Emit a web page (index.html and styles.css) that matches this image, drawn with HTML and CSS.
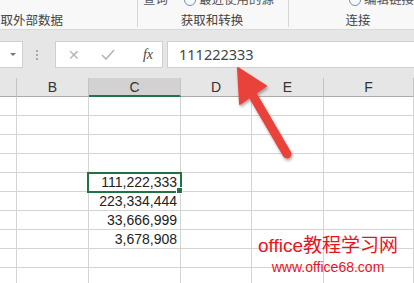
FILE: index.html
```html
<!DOCTYPE html>
<html lang="zh-CN">
<head>
  <meta charset="UTF-8">
  <meta name="viewport" content="width=device-width, initial-scale=1.0">
  <title>数据 - 获取和转换</title>
  <link rel="stylesheet" href="styles.css">
</head>
<body>
  <!-- Ribbon (bottom part only) -->
  <div class="ribbon">
    <div class="group first">
      <div class="top-line"></div>
      <div class="label"><span class="cut">获取外部数据</span></div>
    </div>
    <div class="group second">
      <div class="top-line">
        <span class="query">查询</span>
        <span class="recent"><span class="mini-icon"></span>最近使用的源</span>
      </div>
      <div class="label">获取和转换</div>
    </div>
    <div class="group third">
      <div class="top-line">
        <span class="links"><span class="mini-icon"></span>编辑链接</span>
      </div>
      <div class="label">连接</div>
    </div>
  </div>

  <!-- Formula bar -->
  <div class="formula-bar">
    <div class="name-box"><span class="drop"></span></div>
    <div class="grip"><span></span></div>
    <div class="fx-box">
      <span class="btn cancel">✕</span>
      <span class="btn enter">
        <svg width="14" height="11" viewBox="0 0 14 11"><path d="M1 6 L5 10 L13 1" fill="none" stroke="#b4b4b4" stroke-width="1.6"/></svg>
      </span>
      <span class="btn fx">fx</span>
    </div>
    <div class="formula-input">111222333</div>
  </div>

  <!-- Sheet -->
  <div class="sheet">
    <div class="hdr"></div>
    <div class="hdr">B</div>
    <div class="hdr active">C</div>
    <div class="hdr">D</div>
    <div class="hdr">E</div>
    <div class="hdr">F</div>

    <div class="cell"></div><div class="cell"></div><div class="cell"></div><div class="cell"></div><div class="cell"></div><div class="cell"></div>
    <div class="cell"></div><div class="cell"></div><div class="cell"></div><div class="cell"></div><div class="cell"></div><div class="cell"></div>
    <div class="cell"></div><div class="cell"></div><div class="cell"></div><div class="cell"></div><div class="cell"></div><div class="cell"></div>
    <div class="cell"></div><div class="cell"></div><div class="cell"></div><div class="cell"></div><div class="cell"></div><div class="cell"></div>
    <div class="cell"></div><div class="cell"></div><div class="cell num selected">111,222,333</div><div class="cell"></div><div class="cell"></div><div class="cell"></div>
    <div class="cell"></div><div class="cell"></div><div class="cell num">223,334,444</div><div class="cell"></div><div class="cell"></div><div class="cell"></div>
    <div class="cell"></div><div class="cell"></div><div class="cell num">33,666,999</div><div class="cell"></div><div class="cell"></div><div class="cell"></div>
    <div class="cell"></div><div class="cell"></div><div class="cell num">3,678,908</div><div class="cell"></div><div class="cell"></div><div class="cell"></div>
    <div class="cell"></div><div class="cell"></div><div class="cell"></div><div class="cell"></div><div class="cell"></div><div class="cell"></div>
    <div class="cell"></div><div class="cell"></div><div class="cell"></div><div class="cell"></div><div class="cell"></div><div class="cell"></div>
  </div>

  <!-- Callout arrow pointing at the formula bar -->
  <svg class="arrow" width="414" height="283" viewBox="0 0 414 283">
    <defs>
      <filter id="shadow" x="-20%" y="-20%" width="140%" height="140%">
        <feDropShadow dx="1" dy="2" stdDeviation="1.5" flood-color="#000" flood-opacity="0.35"/>
      </filter>
    </defs>
    <g filter="url(#shadow)" fill="#e8433b" stroke="#e8433b">
      <line x1="252" y1="94" x2="287" y2="154" stroke-width="9" stroke-linecap="round"/>
      <polygon points="238,68 240,104 266,86" stroke-width="2" stroke-linejoin="round"/>
    </g>
  </svg>

  <div class="watermark">
    <div class="wm-title">office教程学习网</div>
    <div class="wm-url">www.office68.com</div>
  </div>
</body>
</html>
```

FILE: styles.css
```css
body {
  margin: 0;
  width: 414px;
  height: 283px;
  overflow: hidden;
  position: relative;
  font-family: "Liberation Sans", "Noto Sans CJK SC", sans-serif;
  background-color: #ffffff;
}

/* ribbon */
.ribbon {
  display: flex;
  height: 29px;
  background-color: #f8f8f8;
  border-bottom: 1px solid #d9d9d9;
  color: #444;
  font-family: "Noto Sans CJK SC", sans-serif;
  font-size: 12.5px;
  overflow: hidden;
}
.group {
  height: 27px;
  border-right: 1px solid #d6d6d6;
  overflow: hidden;
  white-space: nowrap;
}
.group.first {
  flex: 0 0 137px;
}
.group.second {
  flex: 0 0 150px;
}
.group.third {
  flex: 1;
  border-right: none;
}
.top-line {
  display: flex;
  align-items: flex-start;
  height: 6px;
  overflow: hidden;
  line-height: 16px;
  color: #555;
}
.top-line > span {
  flex: none;
  margin-top: -9px;
}
.label {
  line-height: 18px;
  padding-top: 5px;
  text-align: center;
}
.group.first .label {
  text-align: left;
}
.cut {
  margin-left: -12px;
}
.query {
  margin-left: 5px;
}
.recent {
  margin-left: 16px;
}
.links {
  margin-left: 60px;
}
.mini-icon {
  display: inline-block;
  width: 10px;
  height: 10px;
  border: 1px solid #6e8fbf;
  border-radius: 50%;
  margin-right: 3px;
  vertical-align: -2px;
}
.group.second .label {
  padding-right: 2px;
}
.group.third .label {
  width: 138px;
}

/* formula bar */
.formula-bar {
  display: flex;
  align-items: stretch;
  height: 27px;
  padding: 11px 0 10px;
  background-color: #e6e6e6;
}
.name-box {
  width: 23px;
  box-sizing: border-box;
  background-color: #fff;
  border: 1px solid #cfcfcf;
  border-left: none;
  display: flex;
  align-items: center;
  justify-content: flex-end;
  padding-right: 6px;
}
.drop {
  width: 0;
  height: 0;
  border-left: 3px solid transparent;
  border-right: 3px solid transparent;
  border-top: 3px solid #777;
}
.grip {
  width: 32px;
  display: flex;
  align-items: center;
  justify-content: center;
}
.grip span {
  width: 2px;
  height: 10px;
  border-left: 2px dotted #a8a8a8;
  margin-right: 3px;
}
.fx-box {
  width: 108px;
  box-sizing: border-box;
  background-color: #fff;
  border: 1px solid #cfcfcf;
  display: flex;
  align-items: center;
}
.btn {
  display: flex;
  align-items: center;
  justify-content: center;
}
.cancel {
  width: 36px;
  color: #b4b4b4;
  font-size: 14px;
}
.enter {
  width: 32px;
}
.fx {
  flex: 1;
  font-family: "Liberation Serif", serif;
  font-style: italic;
  font-size: 14px;
  color: #444;
  padding-left: 10px;
}
.formula-input {
  flex: 1;
  margin-left: 4px;
  background-color: #fff;
  border: 1px solid #cfcfcf;
  border-right: none;
  font-family: "Noto Sans", "Liberation Sans", sans-serif;
  font-size: 14.5px;
  color: #444;
  line-height: 25px;
  padding-left: 11px;
}

/* sheet */
.sheet {
  display: grid;
  grid-template-columns: 17px 72px 92px 71px 72px 1fr;
  grid-auto-rows: 19px;
}
.hdr {
  background-color: #e6e6e6;
  border-right: 1px solid #c4c4c4;
  border-bottom: 1px solid #ababab;
  box-sizing: border-box;
  text-align: center;
  font-size: 14px;
  line-height: 19px;
  color: #333;
}
.hdr.active {
  background-color: #d2d2d2;
  border-bottom: 2px solid #217346;
  line-height: 18px;
}
.cell {
  border-right: 1px solid #d4d4d4;
  border-bottom: 1px solid #d4d4d4;
  box-sizing: border-box;
  font-size: 14px;
  color: #222;
}
.num {
  text-align: right;
  padding-right: 3px;
  line-height: 19px;
}
.selected {
  position: relative;
}
.selected::after {
  content: "";
  position: absolute;
  left: -2px;
  top: -1px;
  right: -2px;
  bottom: -2px;
  border: 2px solid #217346;
}
.selected::before {
  content: "";
  position: absolute;
  right: -3px;
  bottom: -3px;
  width: 5px;
  height: 5px;
  background-color: #217346;
  border: 1px solid #fff;
  z-index: 1;
}

/* overlays */
.arrow {
  position: absolute;
  left: 0;
  top: 0;
}
.watermark {
  position: absolute;
  left: 258px;
  top: 234px;
  color: #e8141e;
  text-align: center;
}
.wm-title {
  font-family: "Liberation Sans", "Noto Sans CJK SC", sans-serif;
  font-size: 19px;
  line-height: 24px;
}
.wm-url {
  font-family: "Liberation Sans", sans-serif;
  font-size: 14px;
  line-height: 16px;
  margin-top: 1px;
}
```
